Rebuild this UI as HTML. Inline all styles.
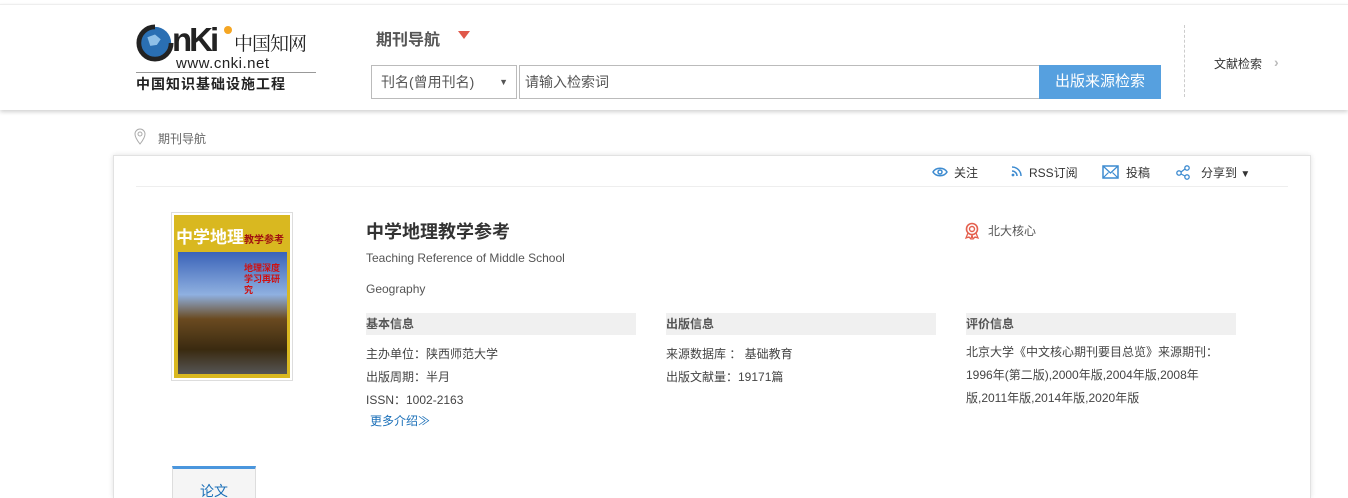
<!DOCTYPE html>
<html><head><meta charset="utf-8"><style>
*{margin:0;padding:0;box-sizing:border-box}
html,body{width:1348px;height:498px;overflow:hidden}
body{background:#fff;font-family:"Liberation Sans","Noto Sans CJK SC",sans-serif;color:#333;position:relative}
.a{position:absolute;white-space:nowrap}
.hdr{position:absolute;left:0;top:4px;width:1348px;height:106px;background:#fff;border-top:1px solid #eee;box-shadow:0 2px 4px rgba(0,0,0,.18)}
.card{position:absolute;left:113px;top:155px;width:1198px;height:343px;background:#fff;border:1px solid #e2e2e2;border-bottom:none;box-shadow:0 0 5px rgba(0,0,0,.12)}
.sec{position:absolute;height:22px;background:#f0f0f0;font-size:12px;font-weight:bold;color:#555;line-height:22px}
.t{font-size:12px;color:#444}
</style></head><body>
<div class="hdr"></div>
<svg class="a" style="left:136px;top:24px" width="38" height="38" viewBox="0 0 40 40"><circle cx="20" cy="20" r="17" fill="#2a6fb3"/><circle cx="20" cy="20" r="17" fill="none" stroke="#222" stroke-width="5" stroke-dasharray="80 30"/><path d="M12 14l8-3 6 5-4 6-7 1z" fill="#8fc0e8"/></svg>
<div class="a" style="left:172px;top:21px;font-size:33px;font-weight:bold;color:#222;letter-spacing:-3px">nKi</div>
<div class="a" style="left:224px;top:26px;width:8px;height:8px;border-radius:50%;background:#f5a623"></div>
<div class="a" style="left:234px;top:29px;font-size:19px;font-family:'Noto Serif CJK SC',serif;color:#222;letter-spacing:-1px">中国知网</div>
<div class="a" style="left:176px;top:55px;font-size:15px;color:#222;letter-spacing:0.5px">www.cnki.net</div>
<div class="a" style="left:136px;top:72px;width:180px;border-top:1px solid #999"></div>
<div class="a" style="left:136px;top:74px;font-size:14px;font-weight:bold;color:#222;letter-spacing:1px">中国知识基础设施工程</div>
<div class="a" style="left:376px;top:26px;font-size:16px;font-weight:bold;color:#555">期刊导航</div>
<div class="a" style="left:458px;top:31px;width:0;height:0;border-left:6px solid transparent;border-right:6px solid transparent;border-top:8px solid #e0584a"></div>
<div class="a" style="left:371px;top:65px;width:146px;height:34px;border:1px solid #bbb;font-size:14px;color:#555;line-height:32px;padding-left:9px">刊名(曾用刊名)<span style="position:absolute;right:8px;font-size:9px;color:#555">▼</span></div>
<div class="a" style="left:519px;top:65px;width:521px;height:34px;border:1px solid #bbb;font-size:14px;color:#555;line-height:32px;padding-left:5px">请输入检索词</div>
<div class="a" style="left:1039px;top:65px;width:122px;height:34px;background:#56a0df;color:#fff;font-size:15px;line-height:34px;text-align:center">出版来源检索</div>
<div class="a" style="left:1184px;top:25px;height:72px;border-left:1px dashed #ccc"></div>
<div class="a" style="left:1214px;top:55px;font-size:12px;color:#333">文献检索</div>
<div class="a" style="left:1274px;top:54px;font-size:14px;color:#bbb;font-weight:bold">›</div>
<svg class="a" style="left:134px;top:128px" width="12" height="17" viewBox="0 0 12 17"><path d="M6 16C2 11 1 8 1 6a5 5 0 0110 0c0 2-1 5-5 10z" fill="none" stroke="#aaa"/><circle cx="6" cy="6" r="2" fill="none" stroke="#aaa"/></svg>
<div class="a" style="left:158px;top:130px;font-size:12px;color:#666">期刊导航</div>
<div class="card"></div>
<div class="a" style="left:136px;top:186px;width:1152px;border-top:1px solid #eee"></div>
<svg class="a" style="left:932px;top:165px" width="16" height="14" viewBox="0 0 16 14"><path d="M1 7C4 2 12 2 15 7 12 12 4 12 1 7z" fill="none" stroke="#3d8bd0" stroke-width="1.5"/><circle cx="8" cy="7" r="2" fill="none" stroke="#3d8bd0" stroke-width="1.5"/></svg>
<div class="a t" style="left:954px;top:164px;color:#333">关注</div>
<svg class="a" style="left:1011px;top:166px" width="11" height="11" viewBox="0 0 11 11"><circle cx="2" cy="9" r="1.4" fill="#3d8bd0"/><path d="M1 5a5 5 0 015 5M1 1a9 9 0 019 9" fill="none" stroke="#3d8bd0" stroke-width="1.5"/></svg>
<div class="a t" style="left:1029px;top:164px;color:#333">RSS订阅</div>
<svg class="a" style="left:1102px;top:165px" width="17" height="14" viewBox="0 0 17 14"><rect x="1" y="1" width="15" height="12" fill="none" stroke="#3d8bd0" stroke-width="1.5"/><path d="M1 1l7.5 7L16 1M1 13l5.5-5.5M16 13l-5.5-5.5" fill="none" stroke="#3d8bd0" stroke-width="1.2"/></svg>
<div class="a t" style="left:1126px;top:164px;color:#333">投稿</div>
<svg class="a" style="left:1176px;top:165px" width="14" height="15" viewBox="0 0 14 15"><circle cx="3" cy="8" r="2.2" fill="none" stroke="#3d8bd0" stroke-width="1.3"/><circle cx="11" cy="3" r="2.2" fill="none" stroke="#3d8bd0" stroke-width="1.3"/><circle cx="11" cy="12" r="2.2" fill="none" stroke="#3d8bd0" stroke-width="1.3"/><path d="M5 7l4-3M5 9l4 2" stroke="#3d8bd0" stroke-width="1.2"/></svg>
<div class="a t" style="left:1201px;top:164px;color:#333">分享到 <span style="font-size:10px">▼</span></div>
<div class="a" style="left:171px;top:212px;width:122px;height:169px;border:1px solid #ddd;padding:2px">
<div style="width:116px;height:163px;background:#d9b820;position:relative;overflow:hidden">
<div style="position:absolute;left:2px;top:8px;font-size:17px;font-weight:bold;color:#fff">中学地理<span style="font-size:10px;color:#a01010">教学参考</span></div>
<div style="position:absolute;left:4px;top:37px;width:109px;height:122px;background:linear-gradient(#3a63b8 0%,#8fb0e0 35%,#6a4a20 55%,#3a2a10 80%,#555 100%)"></div>
<div style="position:absolute;left:70px;top:48px;width:40px;height:60px;font-size:9px;font-weight:bold;color:#d01010;line-height:11px;white-space:normal">地理深度学习再研究</div>
</div></div>
<div class="a" style="left:366px;top:218px;font-size:18px;font-weight:bold;color:#333">中学地理教学参考</div>
<div class="a t" style="left:366px;top:251px;color:#555">Teaching Reference of Middle School</div>
<div class="a t" style="left:366px;top:282px;color:#555">Geography</div>
<svg class="a" style="left:964px;top:222px" width="16" height="18" viewBox="0 0 16 18"><circle cx="8" cy="7" r="5.5" fill="none" stroke="#e4604e" stroke-width="1.6"/><circle cx="8" cy="7" r="2.5" fill="none" stroke="#e4604e" stroke-width="1.4"/><path d="M4 11l-2 5 3-1 2 2 1-4M12 11l2 5-3-1-2 2-1-4" fill="none" stroke="#e4604e" stroke-width="1.3"/></svg>
<div class="a t" style="left:988px;top:222px;color:#555">北大核心</div>
<div class="sec" style="left:366px;top:313px;width:270px">基本信息</div>
<div class="sec" style="left:666px;top:313px;width:270px">出版信息</div>
<div class="sec" style="left:966px;top:313px;width:270px">评价信息</div>
<div class="a t" style="left:366px;top:345px">主办单位：陕西师范大学</div>
<div class="a t" style="left:366px;top:368px">出版周期：半月</div>
<div class="a t" style="left:366px;top:391px">ISSN：1002-2163</div>
<div class="a t" style="left:370px;top:412px;color:#1a6fb8">更多介绍≫</div>
<div class="a t" style="left:666px;top:345px">来源数据库 ： 基础教育</div>
<div class="a t" style="left:666px;top:368px">出版文献量：19171篇</div>
<div class="a t" style="left:966px;top:341px;line-height:23px">北京大学《中文核心期刊要目总览》来源期刊：<br>1996年(第二版),2000年版,2004年版,2008年<br>版,2011年版,2014年版,2020年版</div>
<div class="a" style="left:172px;top:466px;width:84px;height:32px;background:#f5f5f5;border:1px solid #ddd;border-bottom:none;border-top:3px solid #4a96dd;font-size:14px;color:#1a6fb8;text-align:center;line-height:44px;overflow:hidden">论文</div>
</body></html>
